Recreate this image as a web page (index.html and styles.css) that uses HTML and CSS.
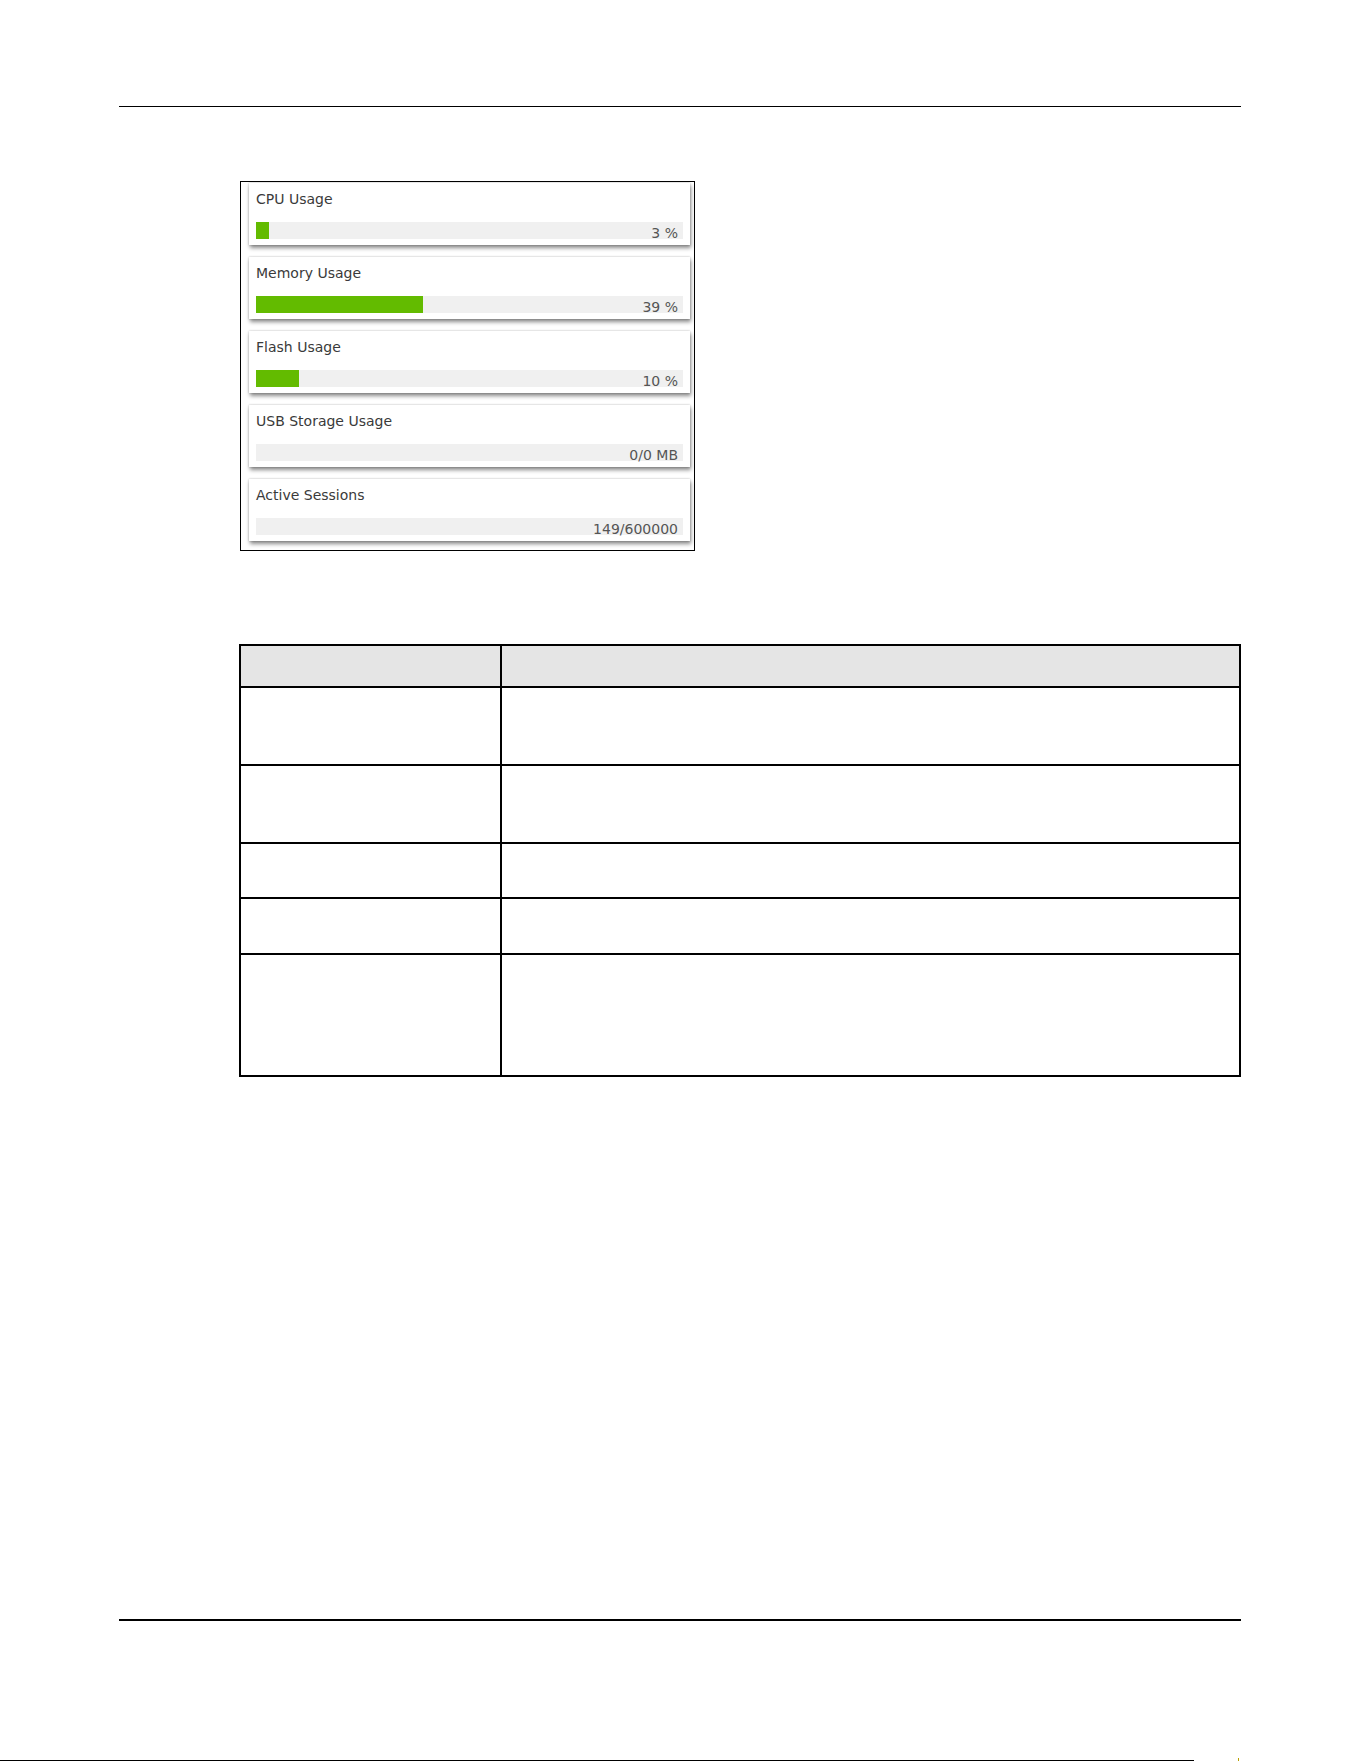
FILE: index.html
```html
<!DOCTYPE html>
<html lang="en">
<head>
    <meta charset="UTF-8">
    <meta name="viewport" content="width=device-width, initial-scale=1.0">
    <title>Dashboard - System Usage</title>
    <link rel="stylesheet" href="styles.css">
</head>
<body>
    <div class="page">
        <hr class="rule-top">

        <!-- screenshot of the usage widgets -->
        <div class="figure">
            <div class="card">
                <div class="card-title">CPU Usage</div>
                <div class="bar">
                    <div class="fill" style="width: 3%"></div>
                    <span class="value">3 %</span>
                </div>
            </div>
            <div class="card">
                <div class="card-title">Memory Usage</div>
                <div class="bar">
                    <div class="fill" style="width: 39%"></div>
                    <span class="value">39 %</span>
                </div>
            </div>
            <div class="card">
                <div class="card-title">Flash Usage</div>
                <div class="bar">
                    <div class="fill" style="width: 10%"></div>
                    <span class="value">10 %</span>
                </div>
            </div>
            <div class="card">
                <div class="card-title">USB Storage Usage</div>
                <div class="bar">
                    <span class="value">0/0 MB</span>
                </div>
            </div>
            <div class="card">
                <div class="card-title">Active Sessions</div>
                <div class="bar">
                    <span class="value">149/600000</span>
                </div>
            </div>
        </div>

        <!-- label / description table -->
        <table class="desc">
            <tr class="head"><th></th><th></th></tr>
            <tr class="r1"><td></td><td></td></tr>
            <tr class="r2"><td></td><td></td></tr>
            <tr class="r3"><td></td><td></td></tr>
            <tr class="r4"><td></td><td></td></tr>
            <tr class="r5"><td></td><td></td></tr>
        </table>

        <hr class="rule-bottom">
        <div class="edge"><span class="tick"></span></div>
    </div>
</body>
</html>
```

FILE: styles.css
```css
* {
    box-sizing: border-box;
}
body {
    margin: 0;
    font-family: "DejaVu Sans", Arial, sans-serif;
    background: #fff;
}
.page {
    height: 1761px;
    display: flex;
    flex-direction: column;
}
hr {
    border: 0;
    margin: 0;
}
.rule-top {
    margin: 106px 0 0 119px;
    width: 1122px;
    border-top: 1px solid #000;
}
.figure {
    margin: 74px 0 0 240px;
    width: 455px;
    border: 1px solid #000;
    padding: 1px 4px 9px 8px;
    display: flex;
    flex-direction: column;
    gap: 12px;
}
.card {
    height: 62px;
    padding: 8px 7px 6px;
    background: #fff;
    box-shadow: 0 0 2px rgba(0, 0, 0, 0.25), 1px 3px 4px rgba(0, 0, 0, 0.45);
}
.card-title {
    font-size: 14px;
    line-height: 16px;
    color: #3a3a3a;
}
.bar {
    margin-top: 15px;
    height: 17px;
    background: #f0f0f0;
    position: relative;
    display: flex;
    justify-content: flex-end;
}
.fill {
    position: absolute;
    left: 0;
    top: 0;
    bottom: 0;
    background: #63bb00;
}
.value {
    padding: 3px 5px 0 0;
    font-size: 14px;
    line-height: 17px;
    color: #555;
    height: 17px;
}
.desc {
    margin: 93px 0 0 239px;
    width: 1002px;
    border-collapse: collapse;
    border: 2px solid #000;
}
.desc th, .desc td {
    border: 2px solid #000;
    padding: 0;
}
.desc th:first-child, .desc td:first-child {
    width: 261px;
}
.head {
    height: 42px;
    background: #e5e5e5;
}
.r1, .r2 {
    height: 78px;
}
.r3 {
    height: 55px;
}
.r4 {
    height: 56px;
}
.r5 {
    height: 122px;
}
.rule-bottom {
    margin: auto 0 0 119px;
    width: 1122px;
    border-top: 2px solid #000;
}
.edge {
    margin-top: 139px;
    height: 1px;
    width: 1194px;
    background: #000;
    position: relative;
}
.tick {
    position: absolute;
    left: 1238px;
    top: -2px;
    width: 1px;
    height: 3px;
    background: #b8a000;
}
```
